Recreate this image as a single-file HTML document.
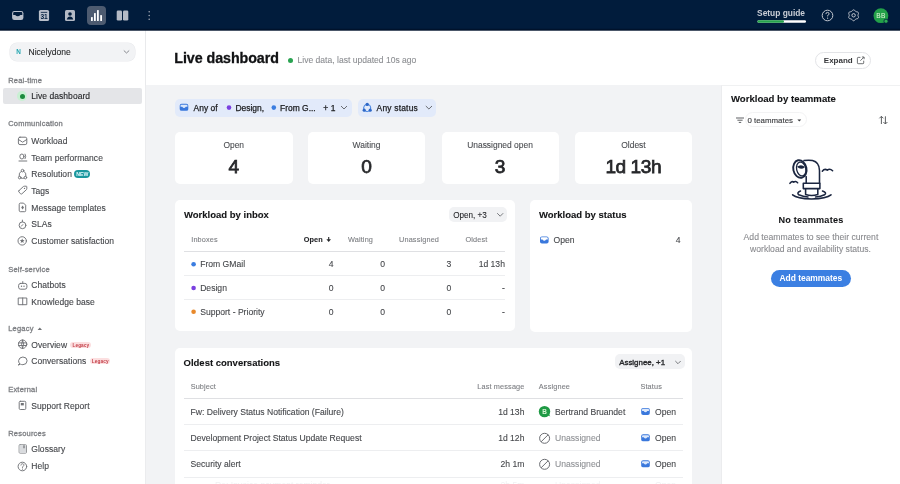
<!DOCTYPE html>
<html><head><meta charset="utf-8">
<style>
*{margin:0;padding:0;box-sizing:border-box}
html,body{width:900px;height:484px;overflow:hidden;background:#fff;font-family:"Liberation Sans",sans-serif;color:#333}
.a{position:absolute}
.t{position:absolute;white-space:nowrap;height:14px;line-height:14px}
svg{position:absolute;overflow:visible;left:0;top:0}
#wrap{position:absolute;left:0;top:0;width:900px;height:484px;overflow:hidden;will-change:transform}
</style></head><body><div id="wrap">

<div class="a" style="left:0px;top:0px;width:900px;height:30px;background:#011c3c;border-radius:0px;"></div>
<div class="a" style="left:0px;top:30px;width:146px;height:454px;background:#fff;border-radius:0px;border-right:1px solid #ebecee"></div>
<div class="a" style="left:146px;top:30px;width:754px;height:55px;background:#fff;border-radius:0px;box-shadow:0 0.5px 1.5px rgba(0,0,0,.05)"></div>
<div class="a" style="left:146px;top:85px;width:575px;height:399px;background:#f2f3f5;border-radius:0px;"></div>
<div class="a" style="left:721px;top:84.6px;width:179px;height:400px;background:#fff;border-radius:0px;border-left:1px solid #ebecee;border-top:1px solid #f0f1f2"></div>
<svg width="900" height="40"><rect x="0" y="28.8" width="900" height="1.9" fill="#00122b"/></svg>
<svg style="left:0;top:0" width="900" height="30">
  <!-- inbox -->
  <rect x="12.1" y="10.9" width="11.3" height="9.1" rx="2.3" fill="#b9bfca"/><path d="M13.20 14.90 H15.10 Q17.75 17.50 20.40 14.90 H22.30 V13.10 Q22.30 12.00 21.20 12.00 H14.30 Q13.20 12.00 13.20 13.10 Z" fill="#011c3c"/>
  <!-- calendar -->
  <rect x="38.9" y="9.9" width="10.2" height="11.1" rx="1.6" fill="#b9bfca"/>
  <rect x="40.8" y="11.9" width="6.4" height=".8" fill="#011c3c"/>
  <text x="44" y="18.8" font-size="6.6" font-weight="700" text-anchor="middle" fill="#011c3c" font-family="Liberation Sans" letter-spacing="-.2">31</text>
  <!-- contact -->
  <rect x="65" y="10" width="10" height="11" rx="1.5" fill="#b4bac5"/>
  <circle cx="70" cy="14" r="1.8" fill="#011c3c"/>
  <path d="M66.8 19.5 Q67.5 16.6 70 16.6 Q72.5 16.6 73.2 19.5 Z" fill="#011c3c"/>
  <!-- analytics active -->
  <rect x="87" y="6" width="19" height="19" rx="4" fill="#4d5b70"/>
  <rect x="91" y="17" width="1.8" height="4" rx=".6" fill="#fff"/>
  <rect x="94" y="13" width="1.8" height="8" rx=".6" fill="#fff"/>
  <rect x="97" y="10" width="1.8" height="11" rx=".6" fill="#fff"/>
  <rect x="100.2" y="15" width="1.8" height="6" rx=".6" fill="#fff"/>
  <!-- panels -->
  <rect x="116.7" y="10.5" width="5.3" height="10" rx="1.3" fill="#b4bac5"/>
  <rect x="123" y="10.5" width="5.3" height="10" rx="1.3" fill="#b4bac5"/>
  <!-- dots -->
  <circle cx="149.2" cy="11.8" r=".8" fill="#9ea5b1"/>
  <circle cx="149.2" cy="15.5" r=".8" fill="#9ea5b1"/>
  <circle cx="149.2" cy="19.2" r=".8" fill="#9ea5b1"/>
  <!-- progress -->
  <rect x="757.5" y="20.3" width="48.5" height="2.4" rx="1.2" fill="#fff"/>
  <rect x="757.5" y="20.3" width="26.5" height="2.4" rx="1.2" fill="#25a24c"/>
  <!-- help -->
  <circle cx="827.5" cy="15.5" r="5.3" stroke="#c3c8d0" stroke-width="1" fill="none"/>
  <path d="M825.9 14.1 Q825.9 12.4 827.5 12.4 Q829.1 12.4 829.1 13.9 Q829.1 14.8 827.6 15.5 V16.4" stroke="#c3c8d0" stroke-width="1" fill="none"/>
  <circle cx="827.6" cy="18.2" r=".6" fill="#c3c8d0"/>
  <!-- gear -->
  <path d="M853.60 9.85 L854.07 9.94 L854.50 10.20 L854.87 10.57 L855.18 10.95 L855.47 11.29 L855.77 11.53 L856.14 11.68 L856.57 11.76 L857.06 11.84 L857.56 11.97 L858.00 12.22 L858.32 12.57 L858.47 13.03 L858.46 13.53 L858.33 14.03 L858.15 14.50 L858.01 14.91 L857.95 15.30 L858.01 15.69 L858.15 16.10 L858.33 16.57 L858.46 17.07 L858.47 17.57 L858.32 18.02 L858.00 18.38 L857.56 18.63 L857.06 18.76 L856.57 18.84 L856.14 18.92 L855.77 19.07 L855.47 19.31 L855.18 19.65 L854.87 20.03 L854.50 20.40 L854.07 20.66 L853.60 20.75 L853.13 20.66 L852.70 20.40 L852.33 20.03 L852.02 19.65 L851.73 19.31 L851.43 19.07 L851.06 18.92 L850.63 18.84 L850.14 18.76 L849.64 18.63 L849.20 18.38 L848.88 18.03 L848.73 17.57 L848.74 17.07 L848.87 16.57 L849.05 16.10 L849.19 15.69 L849.25 15.30 L849.19 14.91 L849.05 14.50 L848.87 14.03 L848.74 13.53 L848.73 13.03 L848.88 12.58 L849.20 12.22 L849.64 11.97 L850.14 11.84 L850.63 11.76 L851.06 11.68 L851.43 11.53 L851.73 11.29 L852.02 10.95 L852.33 10.57 L852.70 10.20 L853.13 9.94 Z" stroke="#c3c8d0" stroke-width="1" fill="none"/>
  <circle cx="853.6" cy="15.3" r="1.7" stroke="#c3c8d0" stroke-width="1" fill="none"/>
  <!-- avatar -->
  <circle cx="880.9" cy="15.7" r="7.4" fill="#22a049"/>
  <text x="880.9" y="18" font-size="6.6" font-weight="400" text-anchor="middle" fill="#e6f7dc" font-family="Liberation Sans" letter-spacing=".3">BB</text>
  <circle cx="886" cy="21.2" r="2.1" fill="#2fae55" stroke="#011c3c" stroke-width=".8"/>
</svg>

<div class="t" style="left:757.08px;top:6px;font-size:8.40px;color:#c9ced6;font-weight:700;">Setup guide</div>
<div class="a" style="left:10px;top:43px;width:125px;height:18px;background:#f2f3f5;border-radius:7px;box-shadow:0 0 0 .6px #e9eaed"></div>
<div class="t" style="left:16.28px;top:45px;font-size:6.40px;color:#22a5b0;font-weight:700;">N</div>
<div class="t" style="left:28.47px;top:45px;font-size:8.55px;color:#1f2022;-webkit-text-stroke:0.08px #1f2022;">Nicelydone</div>
<svg width="146" height="484"><path d="M123.8 50.5 L126.5 53 L129.2 50.5" stroke="#7b7d82" stroke-width=".9" fill="none"/></svg>
<div class="t" style="left:8.22px;top:74px;font-size:7.50px;color:#7d7f83;letter-spacing:0.200px;-webkit-text-stroke:0.3px #7d7f83;">Real-time</div>
<div class="a" style="left:3px;top:88px;width:138.5px;height:16px;background:#e4e5e8;border-radius:2px;"></div>
<div class="a" style="left:17.3px;top:91.3px;width:9.4px;height:9.4px;background:#c9f0d3;border-radius:4.7px;"></div>
<div class="a" style="left:19.5px;top:93.5px;width:5px;height:5px;background:#1b8b3d;border-radius:2.5px;"></div>
<div class="t" style="left:31.27px;top:89px;font-size:8.50px;color:#242528;letter-spacing:0.050px;-webkit-text-stroke:0.12px #242528;">Live dashboard</div>
<div class="t" style="left:8.22px;top:117px;font-size:7.50px;color:#7d7f83;letter-spacing:0.200px;-webkit-text-stroke:0.3px #7d7f83;">Communication</div>
<div class="t" style="left:31.27px;top:134px;font-size:8.50px;color:#45474b;letter-spacing:0.050px;-webkit-text-stroke:0.12px #45474b;">Workload</div>
<div class="t" style="left:31.27px;top:151px;font-size:8.50px;color:#45474b;letter-spacing:0.050px;-webkit-text-stroke:0.12px #45474b;">Team performance</div>
<div class="t" style="left:31.27px;top:167px;font-size:8.50px;color:#45474b;letter-spacing:0.050px;-webkit-text-stroke:0.12px #45474b;">Resolution</div>
<div class="t" style="left:31.27px;top:184px;font-size:8.50px;color:#45474b;letter-spacing:0.050px;-webkit-text-stroke:0.12px #45474b;">Tags</div>
<div class="t" style="left:31.27px;top:201px;font-size:8.50px;color:#45474b;letter-spacing:0.050px;-webkit-text-stroke:0.12px #45474b;">Message templates</div>
<div class="t" style="left:31.27px;top:217px;font-size:8.50px;color:#45474b;letter-spacing:0.050px;-webkit-text-stroke:0.12px #45474b;">SLAs</div>
<div class="t" style="left:31.27px;top:234px;font-size:8.50px;color:#45474b;letter-spacing:0.050px;-webkit-text-stroke:0.12px #45474b;">Customer satisfaction</div>
<div class="a" style="left:74.1px;top:170.2px;width:16.3px;height:7.5px;background:#1a979e;border-radius:4px;"></div>
<div class="t" style="left:-67.72px;width:300px;text-align:center;top:167px;font-size:5.20px;color:#e6fbff;font-weight:700;letter-spacing:0.050px;">NEW</div>
<div class="t" style="left:8.22px;top:263px;font-size:7.50px;color:#7d7f83;letter-spacing:0.200px;-webkit-text-stroke:0.3px #7d7f83;">Self-service</div>
<div class="t" style="left:31.27px;top:278px;font-size:8.50px;color:#45474b;letter-spacing:0.050px;-webkit-text-stroke:0.12px #45474b;">Chatbots</div>
<div class="t" style="left:31.27px;top:295px;font-size:8.50px;color:#45474b;letter-spacing:0.050px;-webkit-text-stroke:0.12px #45474b;">Knowledge base</div>
<div class="t" style="left:8.22px;top:322px;font-size:7.50px;color:#7d7f83;letter-spacing:0.200px;-webkit-text-stroke:0.3px #7d7f83;">Legacy</div>
<svg width="146" height="484"><path d="M37.6 330 L39.8 327.4 L42 330 Z" fill="#6f7175"/></svg>
<div class="t" style="left:31.27px;top:338px;font-size:8.50px;color:#45474b;letter-spacing:0.050px;-webkit-text-stroke:0.12px #45474b;">Overview</div>
<div class="t" style="left:31.27px;top:354px;font-size:8.50px;color:#45474b;letter-spacing:0.050px;-webkit-text-stroke:0.12px #45474b;">Conversations</div>
<div class="a" style="left:70.2px;top:341.9px;width:21.2px;height:6px;background:#fcdfe0;border-radius:3px;"></div>
<div class="t" style="left:-69.15px;width:300px;text-align:center;top:339px;font-size:4.70px;color:#c4424b;font-weight:700;letter-spacing:0.100px;">Legacy</div>
<div class="a" style="left:90px;top:358px;width:20.4px;height:6.4px;background:#fcdfe0;border-radius:3px;"></div>
<div class="t" style="left:-49.75px;width:300px;text-align:center;top:355px;font-size:4.70px;color:#c4424b;font-weight:700;letter-spacing:0.100px;">Legacy</div>
<div class="t" style="left:8.22px;top:383px;font-size:7.50px;color:#7d7f83;letter-spacing:0.200px;-webkit-text-stroke:0.3px #7d7f83;">External</div>
<div class="t" style="left:31.27px;top:399px;font-size:8.50px;color:#45474b;letter-spacing:0.050px;-webkit-text-stroke:0.12px #45474b;">Support Report</div>
<div class="t" style="left:8.22px;top:427px;font-size:7.50px;color:#7d7f83;letter-spacing:0.200px;-webkit-text-stroke:0.3px #7d7f83;">Resources</div>
<div class="t" style="left:31.27px;top:442px;font-size:8.50px;color:#45474b;letter-spacing:0.050px;-webkit-text-stroke:0.12px #45474b;">Glossary</div>
<div class="t" style="left:31.27px;top:459px;font-size:8.50px;color:#45474b;letter-spacing:0.050px;-webkit-text-stroke:0.12px #45474b;">Help</div>
<!-- sidebar icons -->
<svg style="left:0;top:0" width="146" height="484">
 <g stroke="#707276" stroke-width=".95" fill="none" stroke-linecap="round" stroke-linejoin="round">
  <!-- workload: inbox/envelope -->
  <rect x="18.4" y="137.2" width="8.4" height="7.4" rx="1.6"/>
  <path d="M18.6 139.6 L22.6 142.2 L26.6 139.6"/>
  <!-- team performance -->
  <ellipse cx="21.9" cy="156.5" rx="2.1" ry="2.5"/>
  <path d="M25.1 154.1 Q26.5 156.4 25.1 158.7"/>
  <path d="M19 161 H26.8"/>
  <!-- resolution -->
  <path d="M21.3 171.2 Q18.6 172.6 19.1 176.2 M23.8 171.2 Q26.4 172.6 26 176.2 M21.2 178.2 Q22.6 178.7 24 178.2"/>
  <circle cx="22.55" cy="170.6" r="1.3"/>
  <circle cx="19.7" cy="177.6" r="1.3"/>
  <circle cx="25.4" cy="177.6" r="1.3"/>
  <!-- tags -->
  <path d="M18.9 190.7 L23.3 186.6 Q23.8 186.2 24.5 186.2 H26.2 Q26.8 186.2 26.8 186.8 V188.6 Q26.8 189.3 26.3 189.8 L21.9 193.8 Q21.3 194.3 20.7 193.8 L18.9 192.1 Q18.4 191.4 18.9 190.7 Z"/>
  <!-- message templates -->
  <path d="M19.2 204.2 Q19.2 203.1 20.3 203.1 H23.6 L25.7 205.2 V210.6 Q25.7 211.7 24.6 211.7 H20.3 Q19.2 211.7 19.2 210.6 Z"/>
  <!-- SLAs -->
  <circle cx="22.5" cy="225.3" r="3.4"/>
  <path d="M22.4 221.8 V220.1 M21.3 226.2 L22.8 224.6"/>
  <!-- customer satisfaction -->
  <circle cx="22.2" cy="240.9" r="4.2"/>
  <!-- chatbots -->
  <rect x="18.6" y="283.4" width="8.3" height="5.8" rx="2"/>
  <path d="M22.75 283.2 V281.6"/>
  <!-- knowledge base -->
  <path d="M18.6 298 H26.8 V304.7 H18.6 Z M22.7 298 V304.7"/>
  <!-- overview globe -->
  <circle cx="22.6" cy="344.2" r="4.2"/>
  <path d="M18.6 342.9 H26.6 M18.6 345.5 H26.6 M22.6 340 Q20.4 344.2 22.6 348.4 M22.6 340 Q24.8 344.2 22.6 348.4"/>
  <!-- conversations bubble -->
  <path d="M19.5 363.6 Q18.4 362.2 18.6 360.5 Q19.2 357.2 22.9 357 Q27 357.1 27.1 360.8 Q27 364.5 22.9 364.7 Q21.5 364.7 20.5 364.2 L18.5 364.9 Z"/>
  <!-- support report -->
  <rect x="19.2" y="401.3" width="6.6" height="8.2" rx="1.1"/>
  <!-- glossary -->
  <rect x="19.1" y="444.7" width="7.4" height="8.5" rx="1" stroke="#8f9195"/>
  <!-- help -->
  <circle cx="22.4" cy="466.5" r="4.3"/>
  <path d="M20.9 465.1 C20.9 463.2 23.9 463.2 23.9 465.1 C23.9 466.2 22.4 466.2 22.4 467.5" stroke-width=".9"/>
 </g>
 <g fill="#707276">
  <path d="M22.6 205.5 L24 207.5 L22.6 209.5 L21.2 207.5 Z"/>
  <path d="M22.2 238.4 L22.9 240.1 L24.6 240.2 L23.3 241.3 L23.7 243 L22.2 242.1 L20.7 243 L21.1 241.3 L19.8 240.2 L21.5 240.1 Z"/>
  <circle cx="21.5" cy="286.2" r=".7"/><circle cx="24" cy="286.2" r=".7"/>
  <rect x="20.8" y="403" width="3" height="2.4"/>
  <rect x="19.6" y="445.2" width="6.4" height="7.5" fill="#d9dbde"/>
  <path d="M23.2 445.2 V448.6 L24 447.9 L24.8 448.6 V445.2 Z" fill="#8a8c90"/>
  <circle cx="22.5" cy="469.1" r=".55"/>
  <circle cx="24.5" cy="188.4" r=".65"/>
 </g>
</svg>


<div class="t" style="left:174.29px;top:51px;font-size:14.25px;color:#111214;font-weight:700;letter-spacing:-0.050px;-webkit-text-stroke:0.3px #111214;">Live dashboard</div>
<div class="a" style="left:287.9px;top:57.9px;width:5.2px;height:5.2px;background:#2aa351;border-radius:2.6px;"></div>
<div class="t" style="left:297.57px;top:53px;font-size:8.55px;color:#8b8d91;-webkit-text-stroke:0.08px #8b8d91;">Live data, last updated 10s ago</div>
<div class="a" style="left:815.2px;top:51.7px;width:56px;height:17.3px;background:#fff;border-radius:9px;border:1px solid #e3e4e7"></div>
<div class="t" style="left:823.80px;top:54px;font-size:8.00px;color:#36373a;font-weight:700;">Expand</div>
<svg width="900" height="90">
  <path d="M860.4 57.4 H858.2 Q857.4 57.4 857.4 58.2 V62.9 Q857.4 63.7 858.2 63.7 H862.9 Q863.7 63.7 863.7 62.9 V60.7" stroke="#55575b" stroke-width=".85" fill="none"/>
  <path d="M860.4 60.7 L863.9 57.2 M861.9 57 H864.1 V59.2" stroke="#55575b" stroke-width=".85" fill="none"/>
</svg>
<div class="a" style="left:174.7px;top:98.5px;width:177.3px;height:18px;background:#e2eafa;border-radius:5px;"></div>
<div class="a" style="left:358.2px;top:98.5px;width:78.2px;height:18px;background:#e2eafa;border-radius:5px;"></div>
<div class="t" style="left:193.58px;top:101px;font-size:8.45px;color:#1b1c1f;-webkit-text-stroke:0.25px #1b1c1f;">Any of</div>
<div class="t" style="left:235.38px;top:101px;font-size:8.45px;color:#1b1c1f;-webkit-text-stroke:0.25px #1b1c1f;">Design,</div>
<div class="t" style="left:280.08px;top:101px;font-size:8.45px;color:#1b1c1f;-webkit-text-stroke:0.25px #1b1c1f;">From G...</div>
<div class="t" style="left:323.18px;top:101px;font-size:8.45px;color:#1b1c1f;letter-spacing:0.100px;-webkit-text-stroke:0.25px #1b1c1f;">+ 1</div>
<div class="t" style="left:376.58px;top:101px;font-size:8.45px;color:#1b1c1f;letter-spacing:0.200px;-webkit-text-stroke:0.25px #1b1c1f;">Any status</div>
<svg width="721" height="484"><rect x="179.7" y="103.8" width="8.6" height="7" rx="1.9" fill="#3a78dc"/><path d="M180.55 106.70 H182.20 Q184.00 109.40 185.80 106.70 H187.45 V105.60 Q187.45 104.65 186.50 104.65 H181.50 Q180.55 104.65 180.55 105.60 Z" fill="#dce8fb"/>
  <circle cx="229" cy="107.6" r="2.3" fill="#7a40e0"/>
  <circle cx="273.8" cy="107.6" r="2.3" fill="#3b7de0"/>
  <path d="M341 106 L344 109 L347 106" stroke="#5b5d62" stroke-width=".9" fill="none"/>
  <path d="M425.8 106 L428.9 109 L432 106" stroke="#5b5d62" stroke-width=".9" fill="none"/>
  <circle cx="367.2" cy="108" r="3.6" fill="none" stroke="#3f80e0" stroke-width="1"/>
  <circle cx="367.2" cy="104.4" r="1.7" fill="#2d68c8"/>
  <circle cx="364.2" cy="110.2" r="1.6" fill="#2d68c8"/>
  <circle cx="370.2" cy="110.2" r="1.6" fill="#2d68c8"/>
</svg>
<div class="a" style="left:175px;top:132px;width:117.5px;height:52.3px;background:#fff;border-radius:5px;"></div>
<div class="t" style="left:83.75px;width:300px;text-align:center;top:138px;font-size:8.45px;color:#4b4d51;-webkit-text-stroke:0.1px #4b4d51;">Open</div>
<div class="t" style="left:83.75px;width:300px;text-align:center;top:160px;font-size:19.10px;color:#26272a;-webkit-text-stroke:0.75px #26272a;">4</div>
<div class="a" style="left:308px;top:132px;width:117px;height:52.3px;background:#fff;border-radius:5px;"></div>
<div class="t" style="left:216.50px;width:300px;text-align:center;top:138px;font-size:8.45px;color:#4b4d51;-webkit-text-stroke:0.1px #4b4d51;">Waiting</div>
<div class="t" style="left:216.50px;width:300px;text-align:center;top:160px;font-size:19.10px;color:#26272a;-webkit-text-stroke:0.75px #26272a;">0</div>
<div class="a" style="left:441.5px;top:132px;width:117px;height:52.3px;background:#fff;border-radius:5px;"></div>
<div class="t" style="left:350.00px;width:300px;text-align:center;top:138px;font-size:8.45px;color:#4b4d51;-webkit-text-stroke:0.1px #4b4d51;">Unassigned open</div>
<div class="t" style="left:350.00px;width:300px;text-align:center;top:160px;font-size:19.10px;color:#26272a;-webkit-text-stroke:0.75px #26272a;">3</div>
<div class="a" style="left:575px;top:132px;width:117px;height:52.3px;background:#fff;border-radius:5px;"></div>
<div class="t" style="left:483.50px;width:300px;text-align:center;top:138px;font-size:8.45px;color:#4b4d51;-webkit-text-stroke:0.1px #4b4d51;">Oldest</div>
<div class="t" style="left:483.27px;width:300px;text-align:center;top:160px;font-size:19.10px;color:#26272a;letter-spacing:-0.450px;-webkit-text-stroke:0.75px #26272a;">1d 13h</div>
<div class="a" style="left:175px;top:200.2px;width:339.5px;height:131px;background:#fff;border-radius:5px;"></div>
<div class="t" style="left:184.03px;top:208px;font-size:9.50px;color:#141517;font-weight:700;-webkit-text-stroke:0.1px #141517;">Workload by inbox</div>
<div class="a" style="left:449px;top:207.2px;width:58px;height:14.5px;background:#f1f2f4;border-radius:5px;"></div>
<div class="t" style="left:453.19px;top:209px;font-size:8.15px;color:#26272a;-webkit-text-stroke:0.1px #26272a;">Open, +3</div>
<div class="t" style="left:191.23px;top:233px;font-size:7.30px;color:#7c7e82;letter-spacing:0.150px;-webkit-text-stroke:0.1px #7c7e82;">Inboxes</div>
<div class="t" style="left:303.63px;top:233px;font-size:7.30px;color:#26272a;font-weight:700;letter-spacing:0.150px;-webkit-text-stroke:0.1px #26272a;">Open</div>
<div class="t" style="left:347.94px;top:233px;font-size:7.30px;color:#7c7e82;letter-spacing:0.150px;-webkit-text-stroke:0.1px #7c7e82;">Waiting</div>
<div class="t" style="left:399.03px;top:233px;font-size:7.30px;color:#7c7e82;letter-spacing:0.150px;-webkit-text-stroke:0.1px #7c7e82;">Unassigned</div>
<div class="t" style="left:465.44px;top:233px;font-size:7.30px;color:#7c7e82;letter-spacing:0.150px;-webkit-text-stroke:0.1px #7c7e82;">Oldest</div>
<div class="a" style="left:184px;top:250.6px;width:321px;height:1.6px;background:#dfe0e3;border-radius:0px;"></div>
<div class="a" style="left:184px;top:275.3px;width:321px;height:1px;background:#edeef0;border-radius:0px;"></div>
<div class="a" style="left:184px;top:299px;width:321px;height:1px;background:#edeef0;border-radius:0px;"></div>
<div class="t" style="left:200.17px;top:257px;font-size:8.60px;color:#45474b;-webkit-text-stroke:0.1px #45474b;">From GMail</div>
<div class="t" style="left:33.43px;width:300px;text-align:right;top:257px;font-size:8.60px;color:#45474b;-webkit-text-stroke:0.1px #45474b;">4</div>
<div class="t" style="left:84.93px;width:300px;text-align:right;top:257px;font-size:8.60px;color:#45474b;-webkit-text-stroke:0.1px #45474b;">0</div>
<div class="t" style="left:151.23px;width:300px;text-align:right;top:257px;font-size:8.60px;color:#45474b;-webkit-text-stroke:0.1px #45474b;">3</div>
<div class="t" style="left:204.93px;width:300px;text-align:right;top:257px;font-size:8.60px;color:#45474b;-webkit-text-stroke:0.1px #45474b;">1d 13h</div>
<div class="t" style="left:200.17px;top:281px;font-size:8.60px;color:#45474b;-webkit-text-stroke:0.1px #45474b;">Design</div>
<div class="t" style="left:33.43px;width:300px;text-align:right;top:281px;font-size:8.60px;color:#45474b;-webkit-text-stroke:0.1px #45474b;">0</div>
<div class="t" style="left:84.93px;width:300px;text-align:right;top:281px;font-size:8.60px;color:#45474b;-webkit-text-stroke:0.1px #45474b;">0</div>
<div class="t" style="left:151.23px;width:300px;text-align:right;top:281px;font-size:8.60px;color:#45474b;-webkit-text-stroke:0.1px #45474b;">0</div>
<div class="t" style="left:204.93px;width:300px;text-align:right;top:281px;font-size:8.60px;color:#45474b;-webkit-text-stroke:0.1px #45474b;">-</div>
<div class="t" style="left:200.17px;top:305px;font-size:8.60px;color:#45474b;-webkit-text-stroke:0.1px #45474b;">Support - Priority</div>
<div class="t" style="left:33.43px;width:300px;text-align:right;top:305px;font-size:8.60px;color:#45474b;-webkit-text-stroke:0.1px #45474b;">0</div>
<div class="t" style="left:84.93px;width:300px;text-align:right;top:305px;font-size:8.60px;color:#45474b;-webkit-text-stroke:0.1px #45474b;">0</div>
<div class="t" style="left:151.23px;width:300px;text-align:right;top:305px;font-size:8.60px;color:#45474b;-webkit-text-stroke:0.1px #45474b;">0</div>
<div class="t" style="left:204.93px;width:300px;text-align:right;top:305px;font-size:8.60px;color:#45474b;-webkit-text-stroke:0.1px #45474b;">-</div>
<svg width="721" height="484">
  <path d="M497.2 213.2 L500.2 216.2 L503.2 213.2" stroke="#6b6d72" stroke-width=".9" fill="none"/>
  <path d="M328.7 237.1 V240" stroke="#26272a" stroke-width="1.1" fill="none"/><path d="M326.4 239.2 H331 L328.7 241.9 Z" fill="#26272a"/>
  <circle cx="193.6" cy="264.3" r="2.3" fill="#3b7de0"/>
  <circle cx="193.6" cy="288" r="2.3" fill="#7a40e0"/>
  <circle cx="193.6" cy="311.8" r="2.3" fill="#e8892b"/>
</svg>
<div class="a" style="left:530px;top:200.2px;width:162px;height:131.4px;background:#fff;border-radius:5px;"></div>
<div class="t" style="left:539.02px;top:208px;font-size:9.50px;color:#141517;font-weight:700;-webkit-text-stroke:0.1px #141517;">Workload by status</div>
<svg width="721" height="484"><rect x="540" y="236.5" width="8.6" height="7" rx="1.9" fill="#3a78dc"/><path d="M540.85 239.40 H542.50 Q544.30 242.10 546.10 239.40 H547.75 V238.30 Q547.75 237.35 546.80 237.35 H541.80 Q540.85 237.35 540.85 238.30 Z" fill="#fff"/></svg>
<div class="t" style="left:553.57px;top:233px;font-size:8.60px;color:#45474b;-webkit-text-stroke:0.1px #45474b;">Open</div>
<div class="t" style="left:380.43px;width:300px;text-align:right;top:233px;font-size:8.60px;color:#45474b;-webkit-text-stroke:0.1px #45474b;">4</div>
<div class="a" style="left:175px;top:347.8px;width:517px;height:160px;background:#fff;border-radius:5px;"></div>
<div class="t" style="left:183.53px;top:356px;font-size:9.50px;color:#141517;font-weight:700;-webkit-text-stroke:0.1px #141517;">Oldest conversations</div>
<div class="a" style="left:614.7px;top:354.3px;width:70.6px;height:15.2px;background:#f1f2f4;border-radius:5px;"></div>
<div class="t" style="left:619.21px;top:356px;font-size:7.90px;color:#26272a;-webkit-text-stroke:0.35px #26272a;">Assignee, +1</div>
<svg width="721" height="484"><path d="M675.3 361 L678 363.7 L680.7 361" stroke="#6b6d72" stroke-width=".9" fill="none"/></svg>
<div class="t" style="left:190.63px;top:380px;font-size:7.30px;color:#7c7e82;letter-spacing:0.150px;-webkit-text-stroke:0.1px #7c7e82;">Subject</div>
<div class="t" style="left:224.52px;width:300px;text-align:right;top:380px;font-size:7.30px;color:#7c7e82;letter-spacing:0.150px;-webkit-text-stroke:0.1px #7c7e82;">Last message</div>
<div class="t" style="left:538.84px;top:380px;font-size:7.30px;color:#7c7e82;letter-spacing:0.150px;-webkit-text-stroke:0.1px #7c7e82;">Assignee</div>
<div class="t" style="left:640.43px;top:380px;font-size:7.30px;color:#7c7e82;letter-spacing:0.150px;-webkit-text-stroke:0.1px #7c7e82;">Status</div>
<div class="a" style="left:184px;top:397.6px;width:499px;height:1.6px;background:#dfe0e3;border-radius:0px;"></div>
<div class="a" style="left:184px;top:424.4px;width:499px;height:1px;background:#edeef0;border-radius:0px;"></div>
<div class="a" style="left:184px;top:450.3px;width:499px;height:1px;background:#edeef0;border-radius:0px;"></div>
<div class="a" style="left:184px;top:476.9px;width:499px;height:1px;background:#edeef0;border-radius:0px;"></div>
<div class="t" style="left:190.57px;top:405px;font-size:8.60px;color:#45474b;-webkit-text-stroke:0.1px #45474b;">Fw: Delivery Status Notification (Failure)</div>
<div class="t" style="left:224.43px;width:300px;text-align:right;top:405px;font-size:8.60px;color:#45474b;-webkit-text-stroke:0.1px #45474b;">1d 13h</div>
<div class="t" style="left:555.07px;top:405px;font-size:8.60px;color:#45474b;-webkit-text-stroke:0.1px #45474b;">Bertrand Bruandet</div>
<div class="t" style="left:655.07px;top:405px;font-size:8.60px;color:#45474b;-webkit-text-stroke:0.1px #45474b;">Open</div>
<div class="t" style="left:190.57px;top:431px;font-size:8.60px;color:#45474b;-webkit-text-stroke:0.1px #45474b;">Development Project Status Update Request</div>
<div class="t" style="left:224.43px;width:300px;text-align:right;top:431px;font-size:8.60px;color:#45474b;-webkit-text-stroke:0.1px #45474b;">1d 12h</div>
<div class="t" style="left:555.07px;top:431px;font-size:8.60px;color:#8f9195;-webkit-text-stroke:0.1px #8f9195;">Unassigned</div>
<div class="t" style="left:655.07px;top:431px;font-size:8.60px;color:#45474b;-webkit-text-stroke:0.1px #45474b;">Open</div>
<div class="t" style="left:190.57px;top:457px;font-size:8.60px;color:#45474b;-webkit-text-stroke:0.1px #45474b;">Security alert</div>
<div class="t" style="left:224.43px;width:300px;text-align:right;top:457px;font-size:8.60px;color:#45474b;-webkit-text-stroke:0.1px #45474b;">2h 1m</div>
<div class="t" style="left:555.07px;top:457px;font-size:8.60px;color:#8f9195;-webkit-text-stroke:0.1px #8f9195;">Unassigned</div>
<div class="t" style="left:655.07px;top:457px;font-size:8.60px;color:#45474b;-webkit-text-stroke:0.1px #45474b;">Open</div>
<svg width="721" height="484"><circle cx="544.5" cy="411.6" r="5.7" fill="#1f9a45"/><path d="M547.5 415.0 L550.3 416.6 L548.6 413.4 Z" fill="#1f9a45"/><rect x="641.2" y="408.0" width="8.6" height="7" rx="1.9" fill="#3a78dc"/><path d="M642.05 410.90 H643.70 Q645.50 413.60 647.30 410.90 H648.95 V409.80 Q648.95 408.85 648.00 408.85 H643.00 Q642.05 408.85 642.05 409.80 Z" fill="#dce8fb"/><circle cx="544.6" cy="438.3" r="5" stroke="#6b6d72" stroke-width="1" fill="none"/><path d="M541 441.90000000000003 L548.2 434.7" stroke="#6b6d72" stroke-width="1"/><rect x="641.2" y="434.3" width="8.6" height="7" rx="1.9" fill="#3a78dc"/><path d="M642.05 437.20 H643.70 Q645.50 439.90 647.30 437.20 H648.95 V436.10 Q648.95 435.15 648.00 435.15 H643.00 Q642.05 435.15 642.05 436.10 Z" fill="#dce8fb"/><circle cx="544.6" cy="464.3" r="5" stroke="#6b6d72" stroke-width="1" fill="none"/><path d="M541 467.90000000000003 L548.2 460.7" stroke="#6b6d72" stroke-width="1"/><rect x="641.2" y="460.3" width="8.6" height="7" rx="1.9" fill="#3a78dc"/><path d="M642.05 463.20 H643.70 Q645.50 465.90 647.30 463.20 H648.95 V462.10 Q648.95 461.15 648.00 461.15 H643.00 Q642.05 461.15 642.05 462.10 Z" fill="#dce8fb"/></svg>
<div class="t" style="left:394.50px;width:300px;text-align:center;top:405px;font-size:6.40px;color:#d9f5d5;font-weight:700;">B</div>
<div class="t" style="left:215.07px;top:478px;font-size:8.60px;color:#f0f0f2;">Re: Invoice payment reminder</div>
<div class="t" style="left:224.43px;width:300px;text-align:right;top:478px;font-size:8.60px;color:#f0f0f2;">2h 5m</div>
<div class="t" style="left:555.07px;top:478px;font-size:8.60px;color:#f2f2f4;">Unassigned</div>
<div class="t" style="left:655.07px;top:478px;font-size:8.60px;color:#f0f0f2;">Open</div>
<div class="t" style="left:730.92px;top:92px;font-size:9.60px;color:#141517;font-weight:700;-webkit-text-stroke:0.1px #141517;">Workload by teammate</div>
<svg width="900" height="484">
  <path d="M736 118 H744 M737.4 120.2 H742.6 M738.8 122.4 H741.2" stroke="#55575b" stroke-width=".95"/>
  <path d="M797.4 119.6 H801.2 L799.3 121.5 Z" fill="#3a3b3e"/>
  <path d="M881.4 124 V116.3 M879.4 118.3 L881.4 116.3 L883.4 118.3 M885.4 116.3 V124 M883.4 122 L885.4 124 L887.4 122" stroke="#55575b" stroke-width=".95" fill="none"/>
</svg>
<div class="a" style="left:745px;top:112px;width:62px;height:15px;background:transparent;border-radius:8px;border:1px solid #f3f3f4"></div>
<div class="t" style="left:747.40px;top:114px;font-size:7.90px;color:#3a3b3e;-webkit-text-stroke:0.12px #3a3b3e;">0 teammates</div>
<!-- periscope illustration -->
<svg style="left:0;top:0" width="900" height="484">
  <g stroke="#1b2640" stroke-width="1.55" fill="none" stroke-linecap="round" stroke-linejoin="round">
    <path d="M804 160.6 Q809 159.8 812.5 160.6 Q819.3 162.3 819.5 170.5 V183.2"/>
    <path d="M806.2 176.5 V183.2"/>
    <ellipse cx="799.9" cy="169" rx="6.6" ry="8.9" transform="rotate(-12 799.9 169)" fill="#fff" stroke-width="1.9"/>
    <ellipse cx="801.2" cy="169" rx="4.6" ry="7" transform="rotate(-12 801.2 169)" stroke-width="1.3"/>
    <path d="M803.3 183.2 H819.9 V188.6 H803.3 Z" fill="#fff"/>
    <path d="M805.6 188.8 V194.6 Q811.7 196.4 817.8 194.6 V188.8"/>
    <path d="M800.5 191 Q796.3 192.6 798.8 194.8 Q803 196.6 808 197 M815.5 197 Q821 196.6 824.5 194.8 Q827.4 192.8 822.5 191"/>
    <path d="M792.6 194.8 Q797 198.6 811.5 198.9 Q826.5 198.6 831 194.8"/>
    <path d="M789.9 183.4 Q791.7 180.6 793.7 182.2 Q795.6 180.5 797.6 182.8"/>
    <path d="M822.3 171.2 Q824.6 168.2 827.3 170.2 Q829.8 168 832.6 170.8"/>
  </g>
  <path d="M797 166.8 Q801 163.6 805 167 Q801 170.8 797 166.8 Z" fill="#1b2640"/>
</svg>

<div class="t" style="left:660.98px;width:300px;text-align:center;top:213px;font-size:9.10px;color:#141517;font-weight:700;letter-spacing:0.250px;-webkit-text-stroke:0.05px #141517;">No teammates</div>
<div class="t" style="left:660.95px;width:300px;text-align:center;top:230px;font-size:8.65px;color:#88898d;-webkit-text-stroke:0.08px #88898d;">Add teammates to see their current</div>
<div class="t" style="left:660.50px;width:300px;text-align:center;top:242px;font-size:8.60px;color:#88898d;-webkit-text-stroke:0.08px #88898d;">workload and availability status.</div>
<div class="a" style="left:770.7px;top:269.7px;width:80px;height:17.2px;background:#3b7fe2;border-radius:9px;"></div>
<div class="t" style="left:660.85px;width:300px;text-align:center;top:271px;font-size:8.45px;color:#fff;font-weight:700;">Add teammates</div>
</div></body></html>
